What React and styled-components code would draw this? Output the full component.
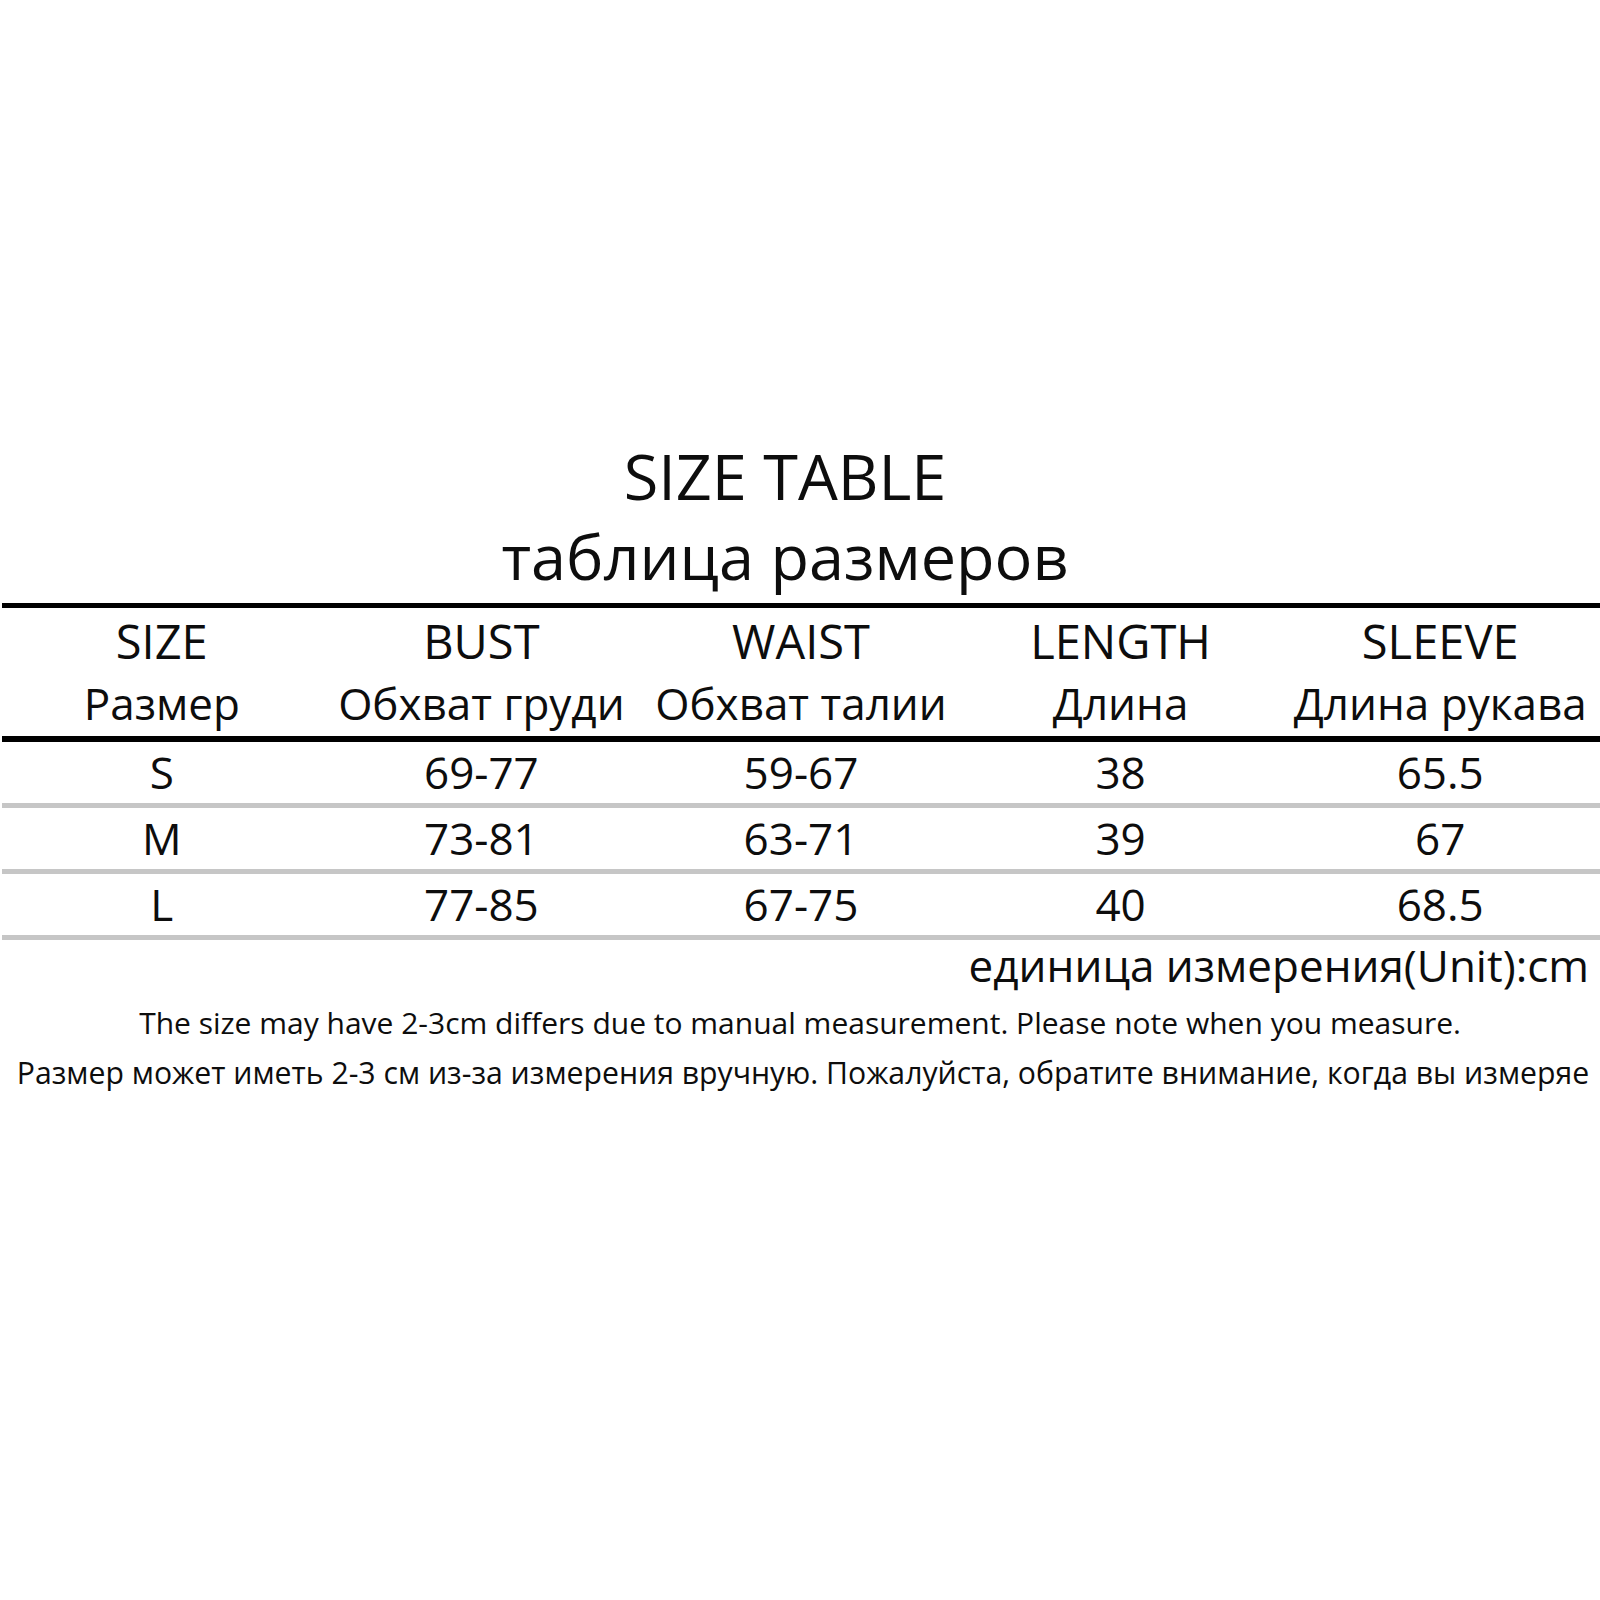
import styled, { createGlobalStyle } from "styled-components";

const GlobalStyle = createGlobalStyle`
  html, body {
    margin: 0;
    padding: 0;
    background: #ffffff;
  }
  body {
    font-family: "Open Sans", "Noto Sans", sans-serif;
    color: #0d0d0d;
  }
`;

const Page = styled.div`
  width: 1600px;
  height: 1600px;
  padding-top: 436px;
  box-sizing: border-box;
  overflow: hidden;
`;

const Title = styled.h1`
  margin: 0;
  padding-right: 30px;
  text-align: center;
  font-weight: 400;
  font-size: ${(p) => p.$size}px;
  line-height: 80px;
`;

const Table = styled.div`
  margin: 7px 0 0 2px;
  width: 1598px;
`;

const Header = styled.div`
  display: grid;
  grid-template-columns: repeat(5, 1fr);
  border-top: 5px solid #000;
  border-bottom: 6px solid #000;
  padding: 4px 0 0;
`;

const HeadCell = styled.div`
  display: flex;
  flex-direction: column;
  align-items: center;
  white-space: nowrap;
`;

const HeadEn = styled.span`
  font-size: 47px;
  line-height: 59px;
`;

const HeadRu = styled.span`
  font-size: 44px;
  line-height: 65px;
`;

const Row = styled.div`
  display: grid;
  grid-template-columns: repeat(5, 1fr);
  border-bottom: 5px solid #c6c6c6;
`;

const Cell = styled.div`
  text-align: center;
  font-size: 44px;
  line-height: 61px;
`;

const Unit = styled.div`
  padding-right: 11px;
  text-align: right;
  font-size: 44px;
  line-height: 50px;
`;

const Note = styled.p`
  margin: ${(p) => p.$gap}px 0 0;
  padding-left: ${(p) => p.$shift}px;
  text-align: center;
  font-size: ${(p) => p.$size}px;
  line-height: 50px;
  white-space: nowrap;
  overflow: hidden;
`;

const columns = [
  ["SIZE", "Размер"],
  ["BUST", "Обхват груди"],
  ["WAIST", "Обхват талии"],
  ["LENGTH", "Длина"],
  ["SLEEVE", "Длина рукава"],
];

const rows = [
  ["S", "69-77", "59-67", "38", "65.5"],
  ["M", "73-81", "63-71", "39", "67"],
  ["L", "77-85", "67-75", "40", "68.5"],
];

function App() {
  return (
    <>
      <GlobalStyle />
      <Page>
        <Title $size={63}>SIZE TABLE</Title>
        <Title $size={63}>таблица размеров</Title>
        <Table>
          <Header>
            {columns.map(([en, ru]) => (
              <HeadCell key={en}>
                <HeadEn>{en}</HeadEn>
                <HeadRu>{ru}</HeadRu>
              </HeadCell>
            ))}
          </Header>
          {rows.map((row) => (
            <Row key={row[0]}>
              {row.map((value, i) => (
                <Cell key={i}>{value}</Cell>
              ))}
            </Row>
          ))}
        </Table>
        <Unit>единица измерения(Unit):cm</Unit>
        <Note $size={30} $gap={8} $shift={0}>
          The size may have 2-3cm differs due to manual measurement. Please note
          when you measure.
        </Note>
        <Note $size={30.2} $gap={0} $shift={6}>
          Размер может иметь 2-3 см из-за измерения вручную. Пожалуйста,
          обратите внимание, когда вы измеряе
        </Note>
      </Page>
    </>
  );
}

export default App;
